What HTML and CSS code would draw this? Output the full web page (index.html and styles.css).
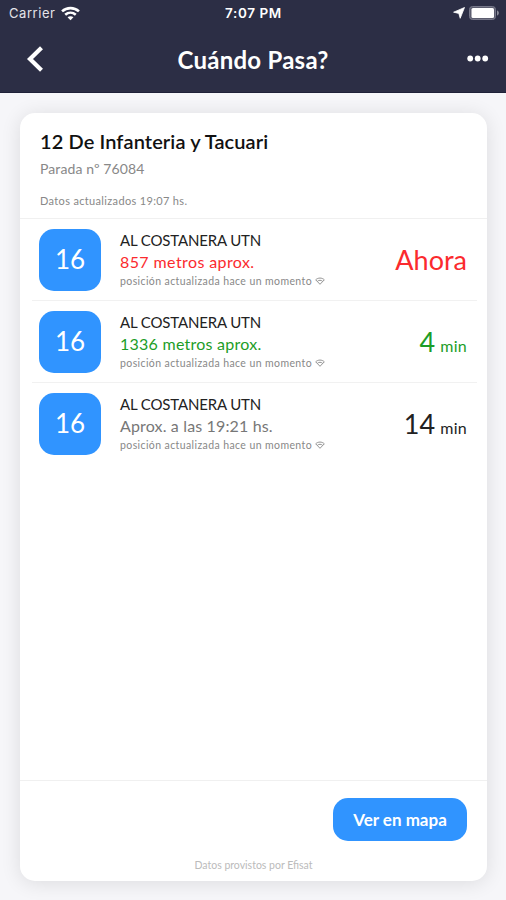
FILE: index.html
```html
<!DOCTYPE html>
<html lang="es">
<head>
    <meta charset="UTF-8">
    <meta name="viewport" content="width=device-width, initial-scale=1.0">
    <title>Cuándo Pasa?</title>
    <link rel="stylesheet" href="styles.css">
</head>
<body>
<svg class="symbols" width="0" height="0">
    <symbol id="wifi" viewBox="0 0 18 14">
        <path d="M1 5C5.5 .9 12.5 .9 17 5M4 8.2C7 5.6 11 5.6 14 8.2" fill="none" stroke="currentColor" stroke-width="2.5"/>
        <path d="M6.2 10.6C7.8 9.2 10.2 9.2 11.8 10.6L9 13.5Z" fill="currentColor"/>
    </symbol>
    <symbol id="signal" viewBox="0 0 10 8">
        <path d="M.7 2.8C3 .5 7 .5 9.3 2.8L5 7.3Z" fill="none" stroke="currentColor" stroke-width=".9"/>
        <path d="M2.5 4.2C4 3 6 3 7.5 4.2" fill="none" stroke="currentColor" stroke-width=".9"/>
    </symbol>
</svg>
<header class="top">
    <div class="status">
        <div class="carrier">Carrier <svg class="status-wifi"><use href="#wifi"/></svg></div>
        <div class="clock">7:07 PM</div>
        <div class="status-right">
            <svg width="12" height="12" viewBox="0 0 12 12"><path d="M11.5.5L7.2 11.3L5.8 6.4L.6 5.2Z" fill="#fff" stroke="#fff" stroke-width=".8" stroke-linejoin="round"/></svg>
            <svg width="31" height="14" viewBox="0 0 31 14">
                <rect x=".5" y=".5" width="26" height="13" rx="3" fill="#5c5d6f" stroke="#77788a"/>
                <rect x="2.5" y="2" width="22.5" height="10" rx="1.5" fill="#fff"/>
                <path d="M28 4.5C30.5 5 30.5 9 28 9.5Z" fill="#8b8c99"/>
            </svg>
        </div>
    </div>
    <div class="navbar">
        <svg class="back" width="18" height="26" viewBox="0 0 18 26"><path d="M15.5 1.8L4 13L15.5 24.2" fill="none" stroke="#fff" stroke-width="4.2"/></svg>
        <h1>Cuándo Pasa?</h1>
        <svg class="more" width="22" height="8" viewBox="0 0 22 8" fill="#fff"><circle cx="3.2" cy="3.5" r="2.9"/><circle cx="10.7" cy="3.5" r="2.9"/><circle cx="18.2" cy="3.5" r="2.9"/></svg>
    </div>
</header>
<main class="card">
    <div class="stop">
        <h2>12 De Infanteria y Tacuari</h2>
        <p class="stop-number">Parada nº 76084</p>
        <p class="updated">Datos actualizados 19:07 hs.</p>
    </div>
    <ul class="arrivals">
        <li class="arrival">
            <div class="line">16</div>
            <div class="info">
                <p class="branch">AL COSTANERA UTN</p>
                <p class="distance now">857 metros aprox.</p>
                <p class="position">posición actualizada hace un momento <svg class="signal"><use href="#signal"/></svg></p>
            </div>
            <div class="time now">Ahora</div>
        </li>
        <li class="arrival">
            <div class="line">16</div>
            <div class="info">
                <p class="branch">AL COSTANERA UTN</p>
                <p class="distance wide soon">1336 metros aprox.</p>
                <p class="position">posición actualizada hace un momento <svg class="signal"><use href="#signal"/></svg></p>
            </div>
            <div class="time soon"><span>4</span><small>min</small></div>
        </li>
        <li class="arrival">
            <div class="line">16</div>
            <div class="info">
                <p class="branch">AL COSTANERA UTN</p>
                <p class="distance wide later">Aprox. a las 19:21 hs.</p>
                <p class="position">posición actualizada hace un momento <svg class="signal"><use href="#signal"/></svg></p>
            </div>
            <div class="time"><span>14</span><small>min</small></div>
        </li>
    </ul>
    <footer class="bottom">
        <button type="button">Ver en mapa</button>
        <p class="source">Datos provistos por Efisat</p>
    </footer>
</main>
</body>
</html>
```
FILE: styles.css
```css
* {
    box-sizing: border-box;
}
body {
    margin: 0;
    height: 900px;
    display: flex;
    flex-direction: column;
    font-family: Lato, "Open Sans", sans-serif;
    background-color: #f6f6f9;
    color: #222;
}
h1, h2, p, ul {
    margin: 0;
    padding: 0;
    font-weight: normal;
    white-space: nowrap;
}
svg {
    flex: none;
}
.symbols {
    position: absolute;
}
.top {
    height: 93px;
    background-color: #2c2e45;
    border-bottom: 1px solid #1f2138;
    color: #fff;
}
.status {
    height: 26px;
    padding: 0 6px 0 9px;
    display: grid;
    grid-template-columns: 1fr auto 1fr;
    align-items: center;
    font-family: Inter, sans-serif;
    font-size: 13px;
}
.carrier {
    display: flex;
    align-items: center;
    gap: 6px;
    letter-spacing: 0.55px;
    color: #e4e4e9;
}
.status-wifi {
    width: 19px;
    height: 15px;
    color: #fff;
}
.clock {
    font-weight: 600;
    font-size: 13.5px;
    letter-spacing: 0.6px;
    margin-right: 2px;
}
.status-right {
    display: flex;
    justify-content: flex-end;
    align-items: center;
    gap: 4px;
}
.navbar {
    height: 66px;
    padding: 0 17px 0 26px;
    display: grid;
    grid-template-columns: 1fr auto 1fr;
    align-items: center;
}
.navbar h1 {
    font-size: 24px;
    font-weight: bold;
    letter-spacing: 0.25px;
    margin-right: 9px;
}
.more {
    justify-self: end;
}
.card {
    flex: 1;
    margin: 20px 19px 19px 20px;
    display: flex;
    flex-direction: column;
    background-color: #fff;
    border-radius: 15px;
    box-shadow: 0 2px 20px rgba(0, 0, 0, 0.11);
}
.stop {
    height: 106px;
    padding: 15px 20px 0;
    border-bottom: 1px solid #f0f0f0;
}
.stop h2 {
    font-size: 20px;
    line-height: 26px;
    font-weight: 600;
    letter-spacing: 0.1px;
    color: #111;
}
.stop-number {
    margin-top: 5px;
    font-size: 14px;
    line-height: 20px;
    letter-spacing: 0.1px;
    color: #888;
}
.updated {
    margin-top: 13px;
    font-size: 11px;
    line-height: 17px;
    letter-spacing: 0.34px;
    color: #888;
}
.arrivals {
    flex: 1;
    list-style: none;
}
.arrival {
    height: 82px;
    margin: 0 10px 0 12px;
    padding: 0 10px 0 7px;
    display: flex;
    align-items: center;
    border-bottom: 1px solid #f1f1f1;
}
.arrival:last-child {
    border-bottom-color: transparent;
}
.line {
    width: 62px;
    height: 62px;
    margin-right: 19px;
    border-radius: 15px;
    background-color: #3094ff;
    color: #fff;
    font-size: 26px;
    line-height: 61px;
    text-align: center;
}
.info {
    flex: 1;
}
.branch {
    font-size: 15px;
    line-height: 21px;
    letter-spacing: -0.15px;
}
.distance {
    font-size: 16px;
    line-height: 22px;
    letter-spacing: 0.4px;
}
.distance.wide {
    letter-spacing: 0.25px;
}
.distance.later {
    letter-spacing: 0.15px;
}
.position {
    display: flex;
    align-items: center;
    gap: 3px;
    font-size: 10.5px;
    line-height: 16px;
    letter-spacing: 0.4px;
    color: #888;
}
.signal {
    width: 10px;
    height: 8px;
}
.time {
    display: flex;
    align-items: baseline;
    gap: 5px;
    font-size: 27px;
    line-height: 32px;
    white-space: nowrap;
}
.time small {
    font-size: 16px;
    line-height: 18px;
    letter-spacing: 0.3px;
}
.now {
    color: #fb2a2e;
}
.soon {
    color: #1c9d27;
}
.later {
    color: #777;
}
.bottom {
    height: 101px;
    padding: 17px 20px 0;
    display: flex;
    flex-direction: column;
    align-items: flex-end;
    border-top: 1px solid #f0f0f0;
}
button {
    width: 134px;
    height: 43px;
    padding: 0;
    border: none;
    border-radius: 15px;
    background-color: #3094ff;
    color: #fff;
    font-family: inherit;
    font-size: 17px;
    font-weight: bold;
}
.source {
    align-self: center;
    margin-top: 17px;
    font-size: 10.5px;
    line-height: 14px;
    color: #bbb;
}
```
